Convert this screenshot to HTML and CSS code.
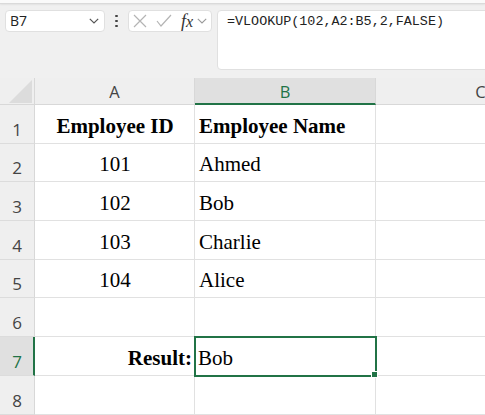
FILE: index.html
```html
<!DOCTYPE html>
<html>
<head>
<meta charset="utf-8">
<link rel="stylesheet" href="styles.css">
</head>
<body>
<div class="app">
  <div class="ribbon-edge"></div>
  <div class="fbar">
    <div class="namebox">
      <span class="ref">B7</span>
      <svg class="chev" width="10" height="6" viewBox="0 0 10 6"><path d="M0.8 0.8 L5 5 L9.2 0.8" fill="none" stroke="#555" stroke-width="1.2"/></svg>
    </div>
    <div class="dots"><i></i><i></i><i></i></div>
    <div class="fnbox">
      <svg class="ic" width="14" height="14" viewBox="0 0 14 14"><path d="M1 1 L13 13 M13 1 L1 13" stroke="#b4b4b4" stroke-width="1.2" fill="none"/></svg>
      <svg class="ic" width="16" height="14" viewBox="0 0 16 14"><path d="M1 7 L5 12 L15 1" stroke="#b4b4b4" stroke-width="1.2" fill="none"/></svg>
      <span class="fx">f<span class="x">x</span></span>
      <svg class="chev2" width="10" height="6" viewBox="0 0 10 6"><path d="M0.8 0.8 L5 5 L9.2 0.8" fill="none" stroke="#9a9a9a" stroke-width="1.1"/></svg>
    </div>
    <div class="formula">=VLOOKUP(102,A2:B5,2,FALSE)</div>
  </div>
  <div class="sheet">
    <div class="corner"><div class="tri"></div></div>
    <div class="ch">A</div>
    <div class="ch sel">B</div>
    <div class="ch">C</div>

    <div class="rh">1</div>
    <div class="c ctr b">Employee ID</div>
    <div class="c b">Employee Name</div>
    <div class="c"></div>

    <div class="rh">2</div>
    <div class="c ctr">101</div>
    <div class="c">Ahmed</div>
    <div class="c"></div>

    <div class="rh">3</div>
    <div class="c ctr">102</div>
    <div class="c">Bob</div>
    <div class="c"></div>

    <div class="rh">4</div>
    <div class="c ctr">103</div>
    <div class="c">Charlie</div>
    <div class="c"></div>

    <div class="rh">5</div>
    <div class="c ctr">104</div>
    <div class="c">Alice</div>
    <div class="c"></div>

    <div class="rh">6</div>
    <div class="c"></div>
    <div class="c"></div>
    <div class="c"></div>

    <div class="rh sel">7</div>
    <div class="c rgt b">Result:</div>
    <div class="c active">Bob</div>
    <div class="c"></div>

    <div class="rh">8</div>
    <div class="c"></div>
    <div class="c"></div>
    <div class="c"></div>
  </div>
</div>
</body>
</html>
```

FILE: styles.css
```css
html, body {
  margin: 0;
  padding: 0;
  background: #f0f0f0;
}
.app {
  width: 485px;
  height: 415px;
  overflow: hidden;
  background: #f0f0f0;
  font-family: "Open Sans", "Noto Sans", sans-serif;
}
.ribbon-edge {
  height: 3px;
  background: #fafafa;
  border-bottom: 1px solid #dadada;
  box-shadow: 0 1px 2px rgba(0,0,0,0.06);
}
.fbar {
  display: flex;
  align-items: flex-start;
  padding: 6px 0 8px 5px;
}
.fbar > * {
  flex: none;
}
.namebox {
  box-sizing: border-box;
  width: 100px;
  height: 22px;
  background: #fff;
  border: 1px solid #e0e0e0;
  border-radius: 4px;
  display: flex;
  align-items: center;
  justify-content: space-between;
  padding: 0 5px 0 4px;
}
.ref {
  font-size: 14px;
  color: #222;
  line-height: 1;
}
.dots {
  width: 23px;
  height: 22px;
  display: flex;
  flex-direction: column;
  align-items: center;
  justify-content: center;
  gap: 2.5px;
}
.dots i {
  display: block;
  width: 2.5px;
  height: 2.5px;
  border-radius: 50%;
  background: #444;
}
.fnbox {
  box-sizing: border-box;
  width: 84px;
  height: 22px;
  background: #fff;
  border: 1px solid #e0e0e0;
  border-radius: 4px;
  display: flex;
  align-items: center;
  padding-left: 4px;
}
.fnbox .ic {
  margin-right: 9px;
}
.fx {
  font-family: "Liberation Serif", serif;
  font-style: italic;
  font-size: 18px;
  color: #333;
  line-height: 1;
  margin-left: 0;
}
.fx .x {
  font-size: 16px;
}
.chev2 {
  margin-left: 4px;
}
.formula {
  box-sizing: border-box;
  width: 300px;
  height: 60px;
  margin-left: 5px;
  background: #fff;
  border: 1px solid #e0e0e0;
  border-radius: 4px;
  padding: 3px 0 0 9px;
  font-family: "Liberation Mono", monospace;
  font-size: 13.4px;
  color: #222;
}
.sheet {
  display: grid;
  grid-template-columns: 35px 160px 181px 210px;
  grid-template-rows: 27px 39px 38px 39px 39px 38px 39px 39px 39px;
  background: #fff;
}
.corner {
  background: #efefef;
  border-right: 1px solid #d8d8d8;
  border-bottom: 1px solid #d8d8d8;
  box-sizing: border-box;
  display: flex;
  justify-content: flex-end;
  align-items: flex-end;
  padding: 0 2px 1px 0;
}
.tri {
  width: 23px;
  height: 23px;
  background: #dcdcdc;
  clip-path: polygon(100% 0, 100% 100%, 0 100%);
}
.ch {
  box-sizing: border-box;
  background: #efefef;
  border-right: 1px solid #d8d8d8;
  border-bottom: 1px solid #d8d8d8;
  display: flex;
  justify-content: center;
  align-items: flex-end;
  padding-bottom: 2px;
  font-size: 16.5px;
  line-height: 20px;
  color: #444;
}
.ch.sel {
  background: #e0e0e0;
  color: #217346;
  border-bottom: 2px solid #217346;
  padding-bottom: 1px;
}
.rh {
  box-sizing: border-box;
  background: #efefef;
  border-right: 1px solid #d8d8d8;
  border-bottom: 1px solid #dcdcdc;
  display: flex;
  justify-content: center;
  align-items: flex-end;
  padding-bottom: 3px;
  font-size: 17px;
  line-height: 20px;
  color: #444;
}
.rh.sel {
  background: #e0e0e0;
  color: #217346;
  border-right: 2px solid #217346;
  padding-left: 1px;
}
.c {
  box-sizing: border-box;
  border-right: 1px solid #e1e1e1;
  border-bottom: 1px solid #e1e1e1;
  display: flex;
  align-items: flex-end;
  padding: 0 3px 5px 4px;
  font-family: "Liberation Serif", serif;
  font-size: 21px;
  line-height: 24px;
  color: #000;
  white-space: nowrap;
}
.c.ctr {
  justify-content: center;
}
.c.rgt {
  justify-content: flex-end;
  padding-right: 2px;
}
.c.b {
  font-weight: bold;
}
.c.active {
  position: relative;
  outline: 2px solid #217346;
  outline-offset: -1px;
  padding-left: 3px;
}
.c.active::after {
  content: "";
  position: absolute;
  right: -3px;
  bottom: -3px;
  width: 5px;
  height: 5px;
  background: #217346;
  border: 1px solid #fff;
  z-index: 2;
}
```
